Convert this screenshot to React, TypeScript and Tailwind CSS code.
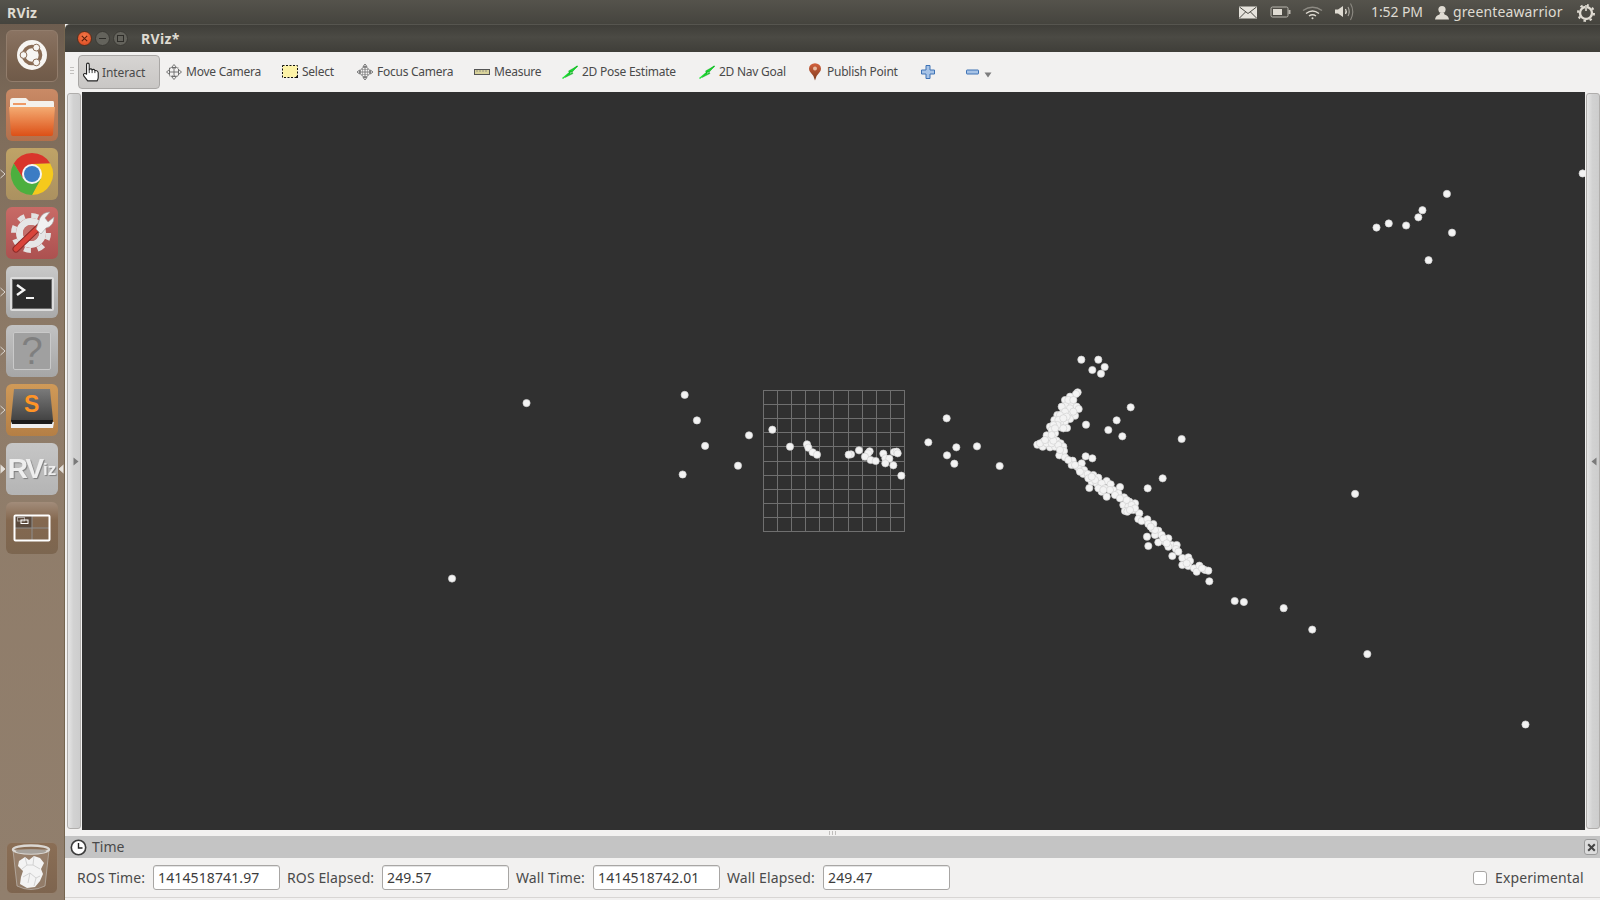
import React from "react";

const zoomA: [number, number][] = [[27,196],[97,179],[150,230],[201,223],[205,233],[218,247],[231,254],[333,253],[326,254],[357,241],[389,244],[384,250],[375,260],[392,270],[407,273],[430,251],[436,265],[448,266],[436,280],[460,286],[462,246],[470,245],[473,250],[484,317],[620,145],[565,217],[649,232],[711,229],[621,256],[643,281],[779,288],[-6,287]];
const zoomB: [number, number][] = [[184,29],[235,29],[254,51],[217,60],[243,71],[173,127],[168,132],[150,140],[135,150],[140,165],[155,160],[170,170],[176,177],[130,185],[150,190],[165,197],[112,195],[125,200],[103,210],[150,207],[135,215],[120,220],[90,230],[122,232],[141,234],[105,250],[80,256],[100,265],[110,272],[88,270],[70,275],[52,284],[68,290],[90,292],[105,290],[122,280],[130,290],[132,303],[118,316],[135,322],[158,332],[155,345],[172,350],[185,340],[197,319],[217,325],[178,357],[192,360],[190,372],[203,372],[220,375],[235,383],[215,395],[230,400],[208,414],[260,393],[272,403],[245,425],[240,410],[260,440],[280,420],[300,411],[295,430],[312,442],[328,455],[345,460],[310,465],[325,470],[315,483],[340,480],[358,490],[355,507],[365,513],[382,508],[400,522],[385,522],[398,537],[415,542],[405,555],[425,555],[445,565],[435,575],[455,585],[470,585],[445,590],[468,597],[475,605],[381,560],[415,577],[385,588],[457,618],[487,624],[505,622],[510,633],[487,645],[505,648],[522,655],[530,665],[538,647],[555,660],[565,662],[568,694],[428,385],[383,415],[332,172],[290,211],[265,240],[307,259],[198,224],[485,267],
[145,150],[160,150],[125,170],[150,175],[135,185],[120,195],[140,200],[115,210],[130,205],[160,185],[112,225],[100,225],[95,240],[105,235],[130,235],[60,280],[80,280],[95,280],[115,285],[100,272],[75,270],[95,255],[120,300],[145,330],[165,345],[205,385],[225,390],[245,400],[255,415],[270,420],[285,435],[235,415],[320,450],[335,465],[300,445],[322,485],[345,475],[405,540],[430,565],[440,580],[180,365],[215,380],[250,420],[330,480],[392,530],[500,640],[546,655]];
const shrunk: [number, number][] = [[1551,170],[1418,190],[1394,206],[1390,213],[1378,221],[1361,219],[1349,223],[1423,228],[1400,255],[516,395],[671,387],[683,412],[691,437],[669,465],[443,567],[1328,484],[1210,589],[1219,590],[1258,596],[1286,617],[1340,641],[1495,710]];
const dots: [number, number][] = [
  ...shrunk.map(([x, y]): [number, number] => [x * 1.0204, y * 1.0204]),
  ...zoomA.map(([x, y]): [number, number] => [740 + x / 3, 370 + y / 3]),
  ...zoomB.map(([x, y]): [number, number] => [1020 + x / 3, 350 + y / 3]),
];
const gridX = [763, 777, 791, 805, 819, 833, 848, 862, 876, 890, 904];
const gridY = [390, 404, 418, 432, 446, 461, 475, 489, 503, 517, 531];

function Pip({ side, filled }: { side: "left" | "right"; filled?: boolean }) {
  return (
    <svg width="6" height="10" viewBox="0 0 6 10" className={side === "left" ? "absolute left-[-6px] top-[21px]" : "absolute right-[-6px] top-[21px]"}>
      <path d={side === "left" ? "M0.5 1 L5 5 L0.5 9" : "M5.5 1 L1 5 L5.5 9"} fill={filled ? "#e6e2dc" : "none"} stroke="#e6e2dc" strokeWidth="0.9" />
    </svg>
  );
}

function Ubuntu() {
  return (
    <svg width="50" height="50" viewBox="0 0 50 50">
      <circle cx="25" cy="24" r="15" fill="#f7f5f2" />
      <circle cx="25" cy="24" r="8.5" fill="none" stroke="#8a6c55" strokeWidth="3.6" />
      <circle cx="16.5" cy="24" r="3.4" fill="#f7f5f2" stroke="#8a6c55" strokeWidth="1" />
      <circle cx="29.3" cy="16.6" r="3.4" fill="#f7f5f2" stroke="#8a6c55" strokeWidth="1" />
      <circle cx="29.3" cy="31.4" r="3.4" fill="#f7f5f2" stroke="#8a6c55" strokeWidth="1" />
    </svg>
  );
}
function Folder() {
  return (
    <svg width="52" height="52" viewBox="0 0 52 52">
      <defs>
        <linearGradient id="fold" x1="0" y1="0" x2="0" y2="1"><stop offset="0" stopColor="#f4ab72" /><stop offset="1" stopColor="#dc5017" /></linearGradient>
      </defs>
      <path d="M4 12 Q4 9 7 9 H20 L23 12 H47 Q48 12 48 14 V20 H4 Z" fill="#f4f1ec" />
      <rect x="7" y="14" width="13" height="2" fill="#ee9a66" />
      <path d="M3 18 H49 L47 45 Q47 47 45 47 H7 Q5 47 5 45 Z" fill="url(#fold)" />
    </svg>
  );
}
function Chrome() {
  const seg = "M0 -10 L18.2 -10.5 A21 21 0 0 0 -18.2 -10.5 L-8.66 5 Z";
  return (
    <svg width="52" height="52" viewBox="0 0 52 52">
      <g transform="translate(26 26)">
        <path d={seg} fill="#d9352b" />
        <path d={seg} fill="#f5c91c" transform="rotate(120)" />
        <path d={seg} fill="#4caf3e" transform="rotate(240)" />
        <circle r="10" fill="#f5f5f5" />
        <circle r="8" fill="#3b7cc4" />
      </g>
    </svg>
  );
}
function Tools() {
  return (
    <svg width="52" height="52" viewBox="0 0 52 52">
      <circle cx="25" cy="26" r="17.5" fill="none" stroke="#e2e2e2" strokeWidth="5" strokeDasharray="7 6.7" />
      <circle cx="25" cy="26" r="11.5" fill="none" stroke="#e6e6e6" strokeWidth="7" />
      <circle cx="25" cy="26" r="8" fill="#c4706c" />
      <path d="M10 42 L33 20" stroke="#8e2a27" strokeWidth="7" strokeLinecap="round" />
      <path d="M10 42 L33 20" stroke="#d9443a" strokeWidth="5" strokeLinecap="round" />
      <path d="M30 22 L34 11 Q37 5 44 5 L39 11 L42 15 L48 10 Q48 19 40 21 L35 27 Z" fill="#f1f1f1" stroke="#a0a0a0" strokeWidth="0.6" />
    </svg>
  );
}
function Terminal() {
  return (
    <svg width="52" height="52" viewBox="0 0 52 52">
      <rect x="4" y="11" width="44" height="34" rx="2" fill="#dcdcdc" />
      <rect x="6" y="13" width="40" height="30" fill="#6b6b6b" />
      <rect x="7" y="14" width="38" height="28" fill="#2b2b2b" />
      <path d="M11 19 L18 24 L11 29" fill="none" stroke="#f4f4f4" strokeWidth="2.4" />
      <path d="M20 32 H28" stroke="#f4f4f4" strokeWidth="2" />
    </svg>
  );
}
function Help() {
  return (
    <div className="absolute left-[7px] top-[7px] w-[38px] h-[38px] rounded-[2px] border border-[#c9c9c9] bg-[#a0a0a0] flex items-center justify-center">
      <span className="text-[38px] leading-none font-normal text-[#7f7f7f] [font-family:'Liberation_Sans',sans-serif]">?</span>
    </div>
  );
}
function Sublime() {
  return (
    <>
      <svg width="52" height="52" viewBox="0 0 52 52" className="absolute left-0 top-0">
        <defs>
          <linearGradient id="subl" x1="0" y1="0" x2="0" y2="1"><stop offset="0" stopColor="#7a7a7a" /><stop offset="1" stopColor="#3e3e3e" /></linearGradient>
        </defs>
        <path d="M5 38 L5 44 H47 L48 38 Z" fill="#f0f0f0" />
        <path d="M8 5 H44 L47 36 L46 39 H6 L5 36 Z" fill="url(#subl)" />
        <path d="M5 36 H47 L46 40 H6 Z" fill="#1c1c1c" />
      </svg>
      <span className="absolute left-[18px] top-[7px] text-[23px] leading-[26px] font-bold text-[#ff9426] [font-family:'Liberation_Sans',sans-serif]">S</span>
    </>
  );
}
function Workspace() {
  return (
    <svg width="52" height="52" viewBox="0 0 52 52">
      <rect x="9" y="14" width="17" height="12" fill="#5b4a3d" />
      <rect x="11.5" y="15.5" width="7" height="3.5" fill="none" stroke="#a9a09a" strokeWidth="1" />
      <rect x="15" y="18" width="7" height="3.5" fill="none" stroke="#fff" strokeWidth="1" />
      <path d="M26 14 V38 M9 26 H43" stroke="#8e8e8e" strokeWidth="1" />
      <rect x="8.5" y="13.5" width="35" height="25" rx="1" fill="none" stroke="#fff" strokeWidth="2" />
    </svg>
  );
}
function Trash() {
  return (
    <svg width="50" height="50" viewBox="0 0 50 50">
      <path d="M6 7 L10 43 Q24 50 38 43 L42 7 Z" fill="#ffffff" fillOpacity="0.14" stroke="#c8c4c0" strokeWidth="0.6" />
      <g fill="#f3f3f3">
        <path d="M12 18 L18 14 L22 17 L27 13 L33 15 L37 20 L34 26 L36 31 L33 38 L28 44 L20 45 L13 41 L14 34 L16 28 L11 23 Z" />
      </g>
      <g fill="none" stroke="#c9c9c9" strokeWidth="0.8">
        <path d="M18 14 L20 22 L15 26 M27 13 L26 22 L33 26 M20 22 L26 22 M16 34 L23 30 L29 35 L33 33 M23 30 L21 40 M29 35 L27 43" />
      </g>
      <ellipse cx="24" cy="6.5" rx="18" ry="4" fill="none" stroke="#dad7d3" strokeWidth="2.4" />
      <ellipse cx="24" cy="8.5" rx="15" ry="2.2" fill="#a7a29c" />
    </svg>
  );
}

function Tile({ bg, children, pip, pipR, pipFilled }: { bg: string; children: React.ReactNode; pip?: boolean; pipR?: boolean; pipFilled?: boolean }) {
  return (
    <div className={`relative w-[52px] h-[52px] rounded-[6px] shrink-0 ${bg}`}>
      {pip && <Pip side="left" filled={pipFilled} />}
      {pipR && <Pip side="right" filled />}
      {children}
    </div>
  );
}

function Launcher() {
  return (
    <aside className="w-[65px] shrink-0 flex flex-col gap-[7px] pl-[6px] pt-[6px] pb-[6px] border-r border-[#75654f] bg-[linear-gradient(180deg,#6d5d4f_0%,#7f6d5b_12%,#8f7c69_40%,#917f6d_100%)]">
      <Tile bg="bg-[linear-gradient(180deg,#8a7362_0%,#7a6350_60%,#6f5a49_100%)] border border-[#927d6c]"><Ubuntu /></Tile>
      <Tile bg="bg-[linear-gradient(180deg,#c98a66_0%,#b2704c_100%)]"><Folder /></Tile>
      <Tile bg="bg-[linear-gradient(180deg,#bfa367_0%,#ab9160_100%)]" pip><Chrome /></Tile>
      <Tile bg="bg-[linear-gradient(180deg,#c86a66_0%,#ac5150_100%)]"><Tools /></Tile>
      <Tile bg="bg-[linear-gradient(180deg,#c9c9c9_0%,#a9a9a9_100%)]" pip><Terminal /></Tile>
      <Tile bg="bg-[linear-gradient(180deg,#c2c2c2_0%,#a6a6a6_100%)]" pip><Help /></Tile>
      <Tile bg="bg-[linear-gradient(180deg,#d09a58_0%,#b57f45_100%)]" pip><Sublime /></Tile>
      <Tile bg="bg-[linear-gradient(180deg,#c6c6c6_0%,#b4b4b4_100%)]" pip pipFilled pipR>
        <div className="absolute inset-0 flex items-center justify-center blur-[0.7px] [font-family:'Liberation_Sans',sans-serif] font-bold text-[#eeeeee] [text-shadow:1px_1px_1px_#7d7d7d]">
          <span className="text-[28px] leading-none tracking-[-2px]">RV</span>
          <span className="text-[17px] leading-none ml-[1px]">iz</span>
        </div>
      </Tile>
      <Tile bg="bg-[linear-gradient(180deg,#a28c7a_0%,#84684f_35%,#7c6650_100%)]"><Workspace /></Tile>
      <div className="mt-auto">
        <Tile bg="bg-[linear-gradient(180deg,#8a6e55_0%,#7e654f_100%)] border border-[#94806d]"><Trash /></Tile>
      </div>
    </aside>
  );
}

function HandIcon() {
  return (
    <svg width="18" height="20" viewBox="0 0 16 18">
      <path d="M4 10 V2.5 Q4 1 5.2 1 Q6.4 1 6.4 2.5 V7 Q7 6 8 6.2 Q8.8 6.4 9 7.2 Q9.8 6.3 10.8 6.8 Q11.4 7.2 11.5 7.9 Q12.4 7.3 13.4 8 Q14.5 8.8 14.5 10 V14 Q14.5 15.5 13.5 17 H5 L1.5 12.5 Q0.8 11.2 1.8 10.5 Q3 10 4 11 Z" fill="#fff" stroke="#222" strokeWidth="1" strokeLinejoin="round" />
      <path d="M6.4 7 V10 M9 7.2 V10 M11.5 7.9 V10" stroke="#222" strokeWidth="0.8" />
    </svg>
  );
}
function MoveIcon() {
  return (
    <svg width="16" height="16" viewBox="0 0 16 16" fill="none" stroke="#666" strokeWidth="0.9">
      <path d="M8 0.5 L10.5 3.5 H5.5 Z M8 15.5 L10.5 12.5 H5.5 Z M0.5 8 L3.5 5.5 V10.5 Z M15.5 8 L12.5 5.5 V10.5 Z" fill="#eee" />
      <path d="M8 3.5 V12.5 M3.5 8 H12.5" />
      <rect x="3.5" y="4" width="9" height="8" strokeDasharray="1.5 1" />
    </svg>
  );
}
function SelectIcon() {
  return (
    <svg width="16" height="16" viewBox="0 0 16 16">
      <rect x="0.5" y="1.5" width="15" height="12" fill="#fdf3a7" stroke="#111" strokeDasharray="2 1.5" />
      <path d="M13 14 H16 V10.5 L13 14 Z" fill="#111" />
    </svg>
  );
}
function FocusIcon() {
  return (
    <svg width="16" height="16" viewBox="0 0 16 16" fill="none" stroke="#777" strokeWidth="0.9">
      <circle cx="8" cy="8" r="4.8" />
      <path d="M8 0 V16 M0 8 H16" />
      <path d="M8 0 L10 2.5 H6 Z M8 16 L10 13.5 H6 Z M0 8 L2.5 6 V10 Z M16 8 L13.5 6 V10 Z" fill="#ddd" />
      <path d="M4.5 5.5 H11.5 M4.5 10.5 H11.5 M5.5 4.5 V11.5 M10.5 4.5 V11.5" strokeWidth="0.5" />
    </svg>
  );
}
function MeasureIcon() {
  return (
    <svg width="16" height="16" viewBox="0 0 16 16">
      <rect x="0.5" y="5.5" width="15" height="5" fill="#d9d39b" stroke="#555" />
      <path d="M3 6 V8 M6 6 V8 M9 6 V8 M12 6 V8" stroke="#777" strokeWidth="0.7" />
    </svg>
  );
}
function ArrowIcon() {
  return (
    <svg width="16" height="16" viewBox="0 0 16 16">
      <path d="M0.5 14.5 L15.5 2" stroke="#1fea36" strokeWidth="1.5" />
      <path d="M3 13.5 L9 7 L11 9.5 Z M15.5 2 L6.5 7 L8.5 10 Z" fill="#18dc2c" stroke="#0d8a1c" strokeWidth="0.4" />
    </svg>
  );
}
function PinIcon() {
  return (
    <svg width="16" height="18" viewBox="0 0 16 18">
      <defs>
        <linearGradient id="pin" x1="0" y1="0" x2="0" y2="1"><stop offset="0" stopColor="#d4603c" /><stop offset="1" stopColor="#7d3c1f" /></linearGradient>
      </defs>
      <path d="M8 17.5 Q7 12.5 3.6 9.5 Q2 7.8 2 5.8 A6 5.6 0 0 1 14 5.8 Q14 7.8 12.4 9.5 Q9 12.5 8 17.5 Z" fill="url(#pin)" />
      <circle cx="8" cy="5.6" r="2" fill="#e7b9a0" />
    </svg>
  );
}
function PlusIcon() {
  return (
    <svg width="16" height="16" viewBox="0 0 16 16">
      <path d="M6 1.5 H10 V6 H14.5 V10 H10 V14.5 H6 V10 H1.5 V6 H6 Z" fill="#a7c3e6" stroke="#3f73b5" strokeWidth="1" />
    </svg>
  );
}
function MinusIcon() {
  return (
    <svg width="16" height="16" viewBox="0 0 16 16">
      <rect x="1.5" y="6" width="12" height="4" fill="#a7c3e6" stroke="#3f73b5" strokeWidth="1" rx="0.5" />
    </svg>
  );
}

function Tool({ icon, label, w }: { icon: React.ReactNode; label: string; w: string }) {
  return (
    <div className="flex items-center gap-[4px] h-[32px]">
      <span className="w-[16px] flex justify-center">{icon}</span>
      <span className={`whitespace-nowrap text-[12px] tracking-[-0.25px] ${w}`}>{label}</span>
    </div>
  );
}

function Toolbar() {
  return (
    <div className="h-[40px] shrink-0 bg-[#f2f1f0] flex items-center text-[#4a4a4a] pl-[5px]">
      <div className="w-[4px] h-[10px] flex flex-col gap-[2px] mr-[4px]">
        <span className="h-px w-[4px] bg-[#c2c0be]" />
        <span className="h-px w-[4px] bg-[#c2c0be]" />
        <span className="h-px w-[4px] bg-[#c2c0be]" />
      </div>
      <div className="w-[82px] h-[34px] rounded-[4px] border border-[#a9a7a5] bg-[linear-gradient(180deg,#d6d4d2_0%,#c9c7c5_100%)] flex items-center pl-[3px] gap-[2px]">
        <HandIcon />
        <span className="text-[12px] tracking-[-0.1px] whitespace-nowrap mt-[1px]">Interact</span>
      </div>
      <div className="flex items-center gap-[22px] ml-[6px]">
        <Tool icon={<MoveIcon />} label="Move Camera" w="w-[74px]" />
        <Tool icon={<SelectIcon />} label="Select" w="w-[33px]" />
        <Tool icon={<FocusIcon />} label="Focus Camera" w="w-[75px]" />
        <Tool icon={<MeasureIcon />} label="Measure" w="w-[46px]" />
        <Tool icon={<ArrowIcon />} label="2D Pose Estimate" w="w-[95px]" />
        <Tool icon={<ArrowIcon />} label="2D Nav Goal" w="w-[66px]" />
        <Tool icon={<PinIcon />} label="Publish Point" w="w-[71px]" />
        <PlusIcon />
        <div className="flex items-center ml-[7px]">
          <MinusIcon />
          <svg width="8" height="6" viewBox="0 0 8 6" className="ml-[3px] mt-[5px]"><path d="M0.5 0.5 H7.5 L4 5.5 Z" fill="#7d7d7d" /></svg>
        </div>
      </div>
    </div>
  );
}

function Strip({ side }: { side: "left" | "right" }) {
  return (
    <div className={side === "left" ? "w-[17px] shrink-0 bg-[#f2f1f0] flex pl-[2px] pr-px py-px" : "w-[15px] shrink-0 bg-[#f2f1f0] flex pl-px py-px"}>
      <div className={side === "left" ? "flex-1 rounded-[3px] border border-[#b0aeac] bg-[linear-gradient(90deg,#e6e6e6_0%,#d2d2d2_45%,#cdcdcd_100%)] flex items-center justify-end pr-px" : "flex-1 rounded-[3px] border border-[#b0aeac] bg-[linear-gradient(90deg,#e6e6e6_0%,#d2d2d2_45%,#cdcdcd_100%)] flex items-center justify-end pr-[2px]"}>
        <svg width="6" height="9" viewBox="0 0 6 9">
          <path d={side === "left" ? "M0.5 0.5 L5.5 4.5 L0.5 8.5 Z" : "M5.5 0.5 L0.5 4.5 L5.5 8.5 Z"} fill="#7a7a7a" />
        </svg>
      </div>
    </div>
  );
}

function Label({ w, children }: { w: string; children: string }) {
  return <span className={`whitespace-nowrap ${w}`}>{children}</span>;
}
function Value({ children }: { children: string }) {
  return (
    <div className="w-[127px] h-[25px] rounded-[3px] border border-[#a8a6a4] bg-white px-[4px] flex items-center text-[#3c3c3c] whitespace-nowrap shadow-[inset_0_1px_0_#e4e4e4]">
      {children}
    </div>
  );
}

function StatusIcons() {
  return (
    <>
      <svg width="18" height="13" viewBox="0 0 18 13" className="absolute left-[1239px] top-[6px]">
        <rect x="0" y="0.5" width="18" height="12" fill="#e6e3dc" />
        <path d="M0.5 1 L9 7.5 L17.5 1 M0.5 12 L6.5 6 M17.5 12 L11.5 6" fill="none" stroke="#4a4942" strokeWidth="1" />
      </svg>
      <svg width="21" height="12" viewBox="0 0 21 12" className="absolute left-[1270px] top-[6px]">
        <rect x="1" y="1" width="17" height="10" rx="1.5" fill="none" stroke="#b9b6ae" strokeWidth="1" />
        <rect x="3" y="3" width="9" height="6" fill="#dfdbd2" />
        <rect x="18.5" y="4" width="2" height="4" fill="#b9b6ae" />
      </svg>
      <svg width="21" height="14" viewBox="0 0 21 14" className="absolute left-[1302px] top-[6px]" fill="none" stroke="#dfdbd2" strokeWidth="1.4">
        <path d="M1 4.5 Q10.5 -2 20 4.5" stroke="#8d8a83" />
        <path d="M4 7.5 Q10.5 2.5 17 7.5" />
        <path d="M7 10 Q10.5 7.5 14 10" />
        <circle cx="10.5" cy="12.3" r="1" fill="#dfdbd2" stroke="none" />
      </svg>
      <svg width="21" height="20" viewBox="0 0 21 20" className="absolute left-[1335px] top-[2px]" fill="none">
        <path d="M0 7.5 H3 L8 4 V15 L3 11.5 H0 Z" fill="#dfdbd2" />
        <path d="M10.5 7 Q12 9.5 10.5 12" stroke="#dfdbd2" strokeWidth="1.3" />
        <path d="M13 5 Q15.5 9.5 13 14" stroke="#a8a59d" strokeWidth="1.1" />
        <path d="M15.5 1.5 Q20 9.5 15.5 18" stroke="#8d8a83" strokeWidth="1.1" />
      </svg>
      <svg width="14" height="15" viewBox="0 0 14 15" className="absolute left-[1435px] top-[5px]">
        <circle cx="7" cy="4.5" r="3.6" fill="#dfdbd2" />
        <path d="M5 8 H9 L9.5 9.5 Q13.5 10.5 14 14.5 H0 Q0.5 10.5 4.5 9.5 Z" fill="#dfdbd2" />
      </svg>
      <svg width="20" height="20" viewBox="0 0 20 20" className="absolute left-[1576px] top-[2px]" fill="none" stroke="#dfdbd2">
        <circle cx="10" cy="11" r="6" strokeWidth="2.4" />
        <circle cx="10" cy="11" r="8" strokeWidth="2" strokeDasharray="2.5 3.8" />
        <path d="M10 2 V9" strokeWidth="2" stroke="#4a4942" />
        <path d="M10 3 V9" strokeWidth="1.6" />
      </svg>
    </>
  );
}

export default function App() {
  return (
    <div className="relative w-[1600px] h-[900px] overflow-hidden flex flex-col bg-[#f2f1f0] [font-family:'Noto_Sans',sans-serif]">
      <header className="h-[24px] shrink-0 bg-[linear-gradient(180deg,#55534c_0%,#45443e_100%)] flex items-center text-[#dfdbd2] text-[14px] pl-[7px]">
        <span className="font-bold tracking-[0.2px]">RViz</span>
        <StatusIcons />
        <span className="absolute left-[1371px] top-0 leading-[24px] w-[52px] whitespace-nowrap tracking-[-0.1px]">1:52 PM</span>
        <span className="absolute left-[1453px] top-0 leading-[24px] w-[110px] whitespace-nowrap tracking-[0.13px]">greenteawarrior</span>
      </header>
      <div className="flex-1 flex min-h-0">
        <Launcher />
        <main className="flex-1 min-w-0 flex flex-col bg-[#f2f1f0]">
          <div className="h-[28px] shrink-0 rounded-tl-[5px] border-t border-[#56554f] bg-[linear-gradient(180deg,#3f3e39_0%,#4b4a44_45%,#3f3e39_100%)] flex items-center pl-[12px] gap-[3px]">
            <span className="w-[15px] h-[15px] rounded-full bg-[radial-gradient(circle_at_50%_35%,#f77a4a,#d8441c)] border border-[#55301f] flex items-center justify-center">
              <svg width="7" height="7" viewBox="0 0 7 7"><path d="M0.8 0.8 L6.2 6.2 M6.2 0.8 L0.8 6.2" stroke="#5a1f0c" strokeWidth="1.1" /></svg>
            </span>
            <span className="w-[15px] h-[15px] rounded-full bg-[#64635c] border border-[#3a3934] flex items-center justify-center">
              <span className="w-[7px] h-px bg-[#2e2d29]" />
            </span>
            <span className="w-[15px] h-[15px] rounded-full bg-[#64635c] border border-[#3a3934] flex items-center justify-center">
              <span className="w-[7px] h-[7px] border border-[#2e2d29]" />
            </span>
            <span className="ml-[10px] text-[14px] font-bold text-[#dfdbd2] tracking-[0.35px]">RViz*</span>
          </div>
          <Toolbar />
          <div className="h-[738px] shrink-0 flex">
            <Strip side="left" />
            <svg width="1503" height="738" viewBox="82 92 1503 738" className="block shrink-0 bg-[#303030]">
              <g stroke="#6f6f6f" strokeWidth="1" shapeRendering="crispEdges">
                {gridX.map((x) => <line key={x} x1={x + 0.5} x2={x + 0.5} y1={390} y2={532} />)}
                {gridY.map((y) => <line key={y} x1={763} x2={905} y1={y + 0.5} y2={y + 0.5} />)}
              </g>
              <g fill="#f3f3f3" stroke="#d2d2d2" strokeWidth="0.7">
                {dots.map(([x, y], i) => <circle key={i} cx={x} cy={y} r={3.6} />)}
              </g>
            </svg>
            <Strip side="right" />
          </div>
          <div className="h-[6px] shrink-0 flex justify-center items-center gap-[2px]">
            <span className="w-px h-[4px] bg-[#c0bebc]" />
            <span className="w-px h-[4px] bg-[#c0bebc]" />
            <span className="w-px h-[4px] bg-[#c0bebc]" />
          </div>
          <div className="h-[22px] shrink-0 bg-[#c4c4c4] flex items-center pl-[5px] pr-[2px] text-[14px] text-[#4a4a4a]">
            <svg width="17" height="17" viewBox="0 0 17 17" className="mt-[1px]">
              <circle cx="8.5" cy="8.5" r="7.2" fill="#fff" stroke="#3c3c3c" strokeWidth="1.6" />
              <path d="M8.5 4 V9 H12.5" fill="none" stroke="#222" strokeWidth="1.4" />
            </svg>
            <span className="ml-[5px] mt-[-2px]">Time</span>
            <span className="ml-auto w-[14px] h-[16px] rounded-[3px] border border-[#9a9a9a] bg-[#dcdcdc] flex items-center justify-center">
              <svg width="9" height="9" viewBox="0 0 9 9"><path d="M1.2 1.2 L7.8 7.8 M7.8 1.2 L1.2 7.8" stroke="#444" strokeWidth="2" /></svg>
            </span>
          </div>
          <div className="h-[40px] shrink-0 border-b border-[#d8d6d4] flex items-center gap-[7px] pl-[12px] pr-[16px] text-[14px] text-[#4a4a4a] tracking-[0.12px]">
            <Label w="w-[69px]">ROS Time:</Label>
            <Value>1414518741.97</Value>
            <Label w="w-[88px]">ROS Elapsed:</Label>
            <Value>249.57</Value>
            <Label w="w-[70px]">Wall Time:</Label>
            <Value>1414518742.01</Value>
            <Label w="w-[89px]">Wall Elapsed:</Label>
            <Value>249.47</Value>
            <span className="ml-auto w-[14px] h-[14px] rounded-[3px] border border-[#a8a6a4] bg-white" />
            <span className="ml-[1px] w-[89px] whitespace-nowrap">Experimental</span>
          </div>
          <div className="h-[2px] shrink-0" />
        </main>
      </div>
    </div>
  );
}
